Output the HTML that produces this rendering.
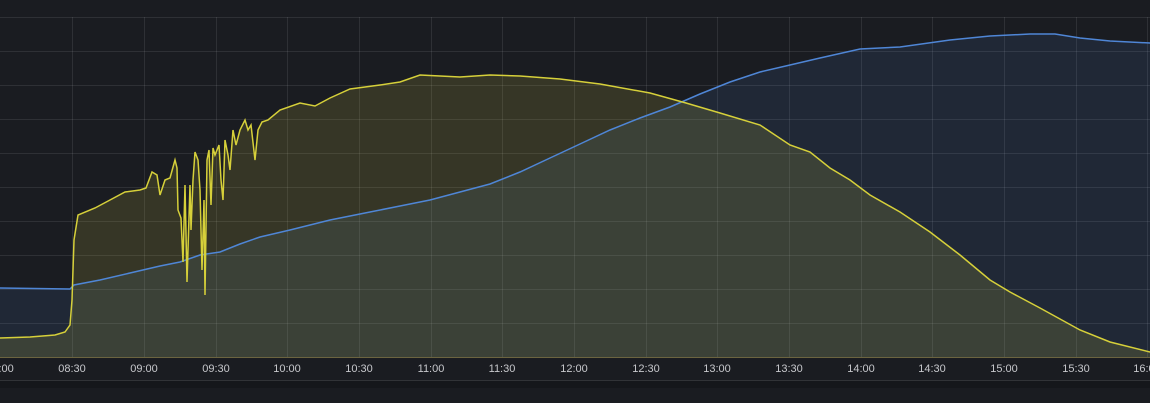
<!DOCTYPE html>
<html><head><meta charset="utf-8"><style>
html,body{margin:0;padding:0;background:#1a1c21;width:1150px;height:403px;overflow:hidden}
svg{display:block}
text{font-family:"Liberation Sans",sans-serif;font-size:11px;fill:#c7c8cc}
</style></head><body>
<svg width="1150" height="403" viewBox="0 0 1150 403">
<rect width="1150" height="403" fill="#1a1c21"/>
<g stroke="rgba(255,255,255,0.09)" stroke-width="1">
<line x1="0" y1="17.5" x2="1150" y2="17.5"/><line x1="0" y1="51.5" x2="1150" y2="51.5"/><line x1="0" y1="85.5" x2="1150" y2="85.5"/><line x1="0" y1="119.5" x2="1150" y2="119.5"/><line x1="0" y1="153.5" x2="1150" y2="153.5"/><line x1="0" y1="187.5" x2="1150" y2="187.5"/><line x1="0" y1="221.5" x2="1150" y2="221.5"/><line x1="0" y1="255.5" x2="1150" y2="255.5"/><line x1="0" y1="289.5" x2="1150" y2="289.5"/><line x1="0" y1="323.5" x2="1150" y2="323.5"/>
<line x1="72.5" y1="17" x2="72.5" y2="357"/><line x1="144.5" y1="17" x2="144.5" y2="357"/><line x1="216.5" y1="17" x2="216.5" y2="357"/><line x1="287.5" y1="17" x2="287.5" y2="357"/><line x1="359.5" y1="17" x2="359.5" y2="357"/><line x1="431.5" y1="17" x2="431.5" y2="357"/><line x1="502.5" y1="17" x2="502.5" y2="357"/><line x1="574.5" y1="17" x2="574.5" y2="357"/><line x1="646.5" y1="17" x2="646.5" y2="357"/><line x1="717.5" y1="17" x2="717.5" y2="357"/><line x1="789.5" y1="17" x2="789.5" y2="357"/><line x1="861.5" y1="17" x2="861.5" y2="357"/><line x1="932.5" y1="17" x2="932.5" y2="357"/><line x1="1004.5" y1="17" x2="1004.5" y2="357"/><line x1="1076.5" y1="17" x2="1076.5" y2="357"/><line x1="1147.5" y1="17" x2="1147.5" y2="357"/>
</g>
<defs>
<path id="b" d="M0 288 L70 289 L74 285 L100 280 L130 273 L160 266 L180 262 L200 255 L220 252 L240 244 L260 237 L290 230 L330 220 L370 212 L400 206 L430 200 L460 192 L490 184 L520 172 L550 158 L580 144 L610 130 L640 118 L670 107 L700 94 L730 82 L760 72 L790 65 L820 58 L860 49 L900 47 L950 40 L990 36 L1030 34 L1055 34 L1080 38 L1110 41 L1150 43"/>
<path id="y" d="M0 338 L30 337 L55 335 L65 332 L70 325 L72 300 L74 240 L78 215 L95 208 L110 200 L125 192 L140 190 L146 188 L152 172 L157 175 L160 195 L165 180 L170 178 L175 160 L177 168 L178 210 L181 218 L183 262 L185 185 L187 282 L190 185 L191 230 L193 180 L195 152 L198 160 L200 190 L202 270 L204 200 L205 295 L207 160 L209 150 L211 205 L213 148 L215 155 L219 145 L221 180 L223 200 L225 140 L228 155 L230 170 L233 130 L236 145 L240 130 L245 120 L248 130 L251 125 L255 160 L258 130 L262 122 L268 120 L280 110 L300 103 L315 106 L330 98 L350 89 L380 85 L400 82 L420 75 L440 76 L460 77 L490 75 L520 76 L560 79 L600 84 L650 93 L686 103 L720 113 L760 125 L790 145 L810 152 L830 168 L850 180 L870 195 L900 212 L930 232 L960 255 L990 280 L1010 292 L1040 308 L1080 330 L1110 342 L1150 352"/>
</defs>
<path d="M0 288 L70 289 L74 285 L100 280 L130 273 L160 266 L180 262 L200 255 L220 252 L240 244 L260 237 L290 230 L330 220 L370 212 L400 206 L430 200 L460 192 L490 184 L520 172 L550 158 L580 144 L610 130 L640 118 L670 107 L700 94 L730 82 L760 72 L790 65 L820 58 L860 49 L900 47 L950 40 L990 36 L1030 34 L1055 34 L1080 38 L1110 41 L1150 43 L1150 357 L0 357 Z" fill="rgba(87,148,242,0.1)"/>
<path d="M0 338 L30 337 L55 335 L65 332 L70 325 L72 300 L74 240 L78 215 L95 208 L110 200 L125 192 L140 190 L146 188 L152 172 L157 175 L160 195 L165 180 L170 178 L175 160 L177 168 L178 210 L181 218 L183 262 L185 185 L187 282 L190 185 L191 230 L193 180 L195 152 L198 160 L200 190 L202 270 L204 200 L205 295 L207 160 L209 150 L211 205 L213 148 L215 155 L219 145 L221 180 L223 200 L225 140 L228 155 L230 170 L233 130 L236 145 L240 130 L245 120 L248 130 L251 125 L255 160 L258 130 L262 122 L268 120 L280 110 L300 103 L315 106 L330 98 L350 89 L380 85 L400 82 L420 75 L440 76 L460 77 L490 75 L520 76 L560 79 L600 84 L650 93 L686 103 L720 113 L760 125 L790 145 L810 152 L830 168 L850 180 L870 195 L900 212 L930 232 L960 255 L990 280 L1010 292 L1040 308 L1080 330 L1110 342 L1150 352 L1150 357 L0 357 Z" fill="rgba(215,210,70,0.15)"/>
<use href="#b" fill="none" stroke="#4f86d6" stroke-width="1.5"/>
<use href="#y" fill="none" stroke="#d6d03a" stroke-width="1.5"/>
<line x1="0" y1="357.5" x2="1150" y2="357.5" stroke="#6b6440" stroke-width="1"/>
<g text-anchor="middle">
<text x="0" y="372">08:00</text><text x="72" y="372">08:30</text><text x="144" y="372">09:00</text><text x="216" y="372">09:30</text><text x="287" y="372">10:00</text><text x="359" y="372">10:30</text><text x="431" y="372">11:00</text><text x="502" y="372">11:30</text><text x="574" y="372">12:00</text><text x="646" y="372">12:30</text><text x="717" y="372">13:00</text><text x="789" y="372">13:30</text><text x="861" y="372">14:00</text><text x="932" y="372">14:30</text><text x="1004" y="372">15:00</text><text x="1076" y="372">15:30</text><text x="1147" y="372">16:00</text>
</g>
<line x1="0" y1="380.5" x2="1150" y2="380.5" stroke="rgba(255,255,255,0.1)"/>
<rect x="0" y="381" width="1150" height="7" fill="#15171b"/>
</svg>
</body></html>
